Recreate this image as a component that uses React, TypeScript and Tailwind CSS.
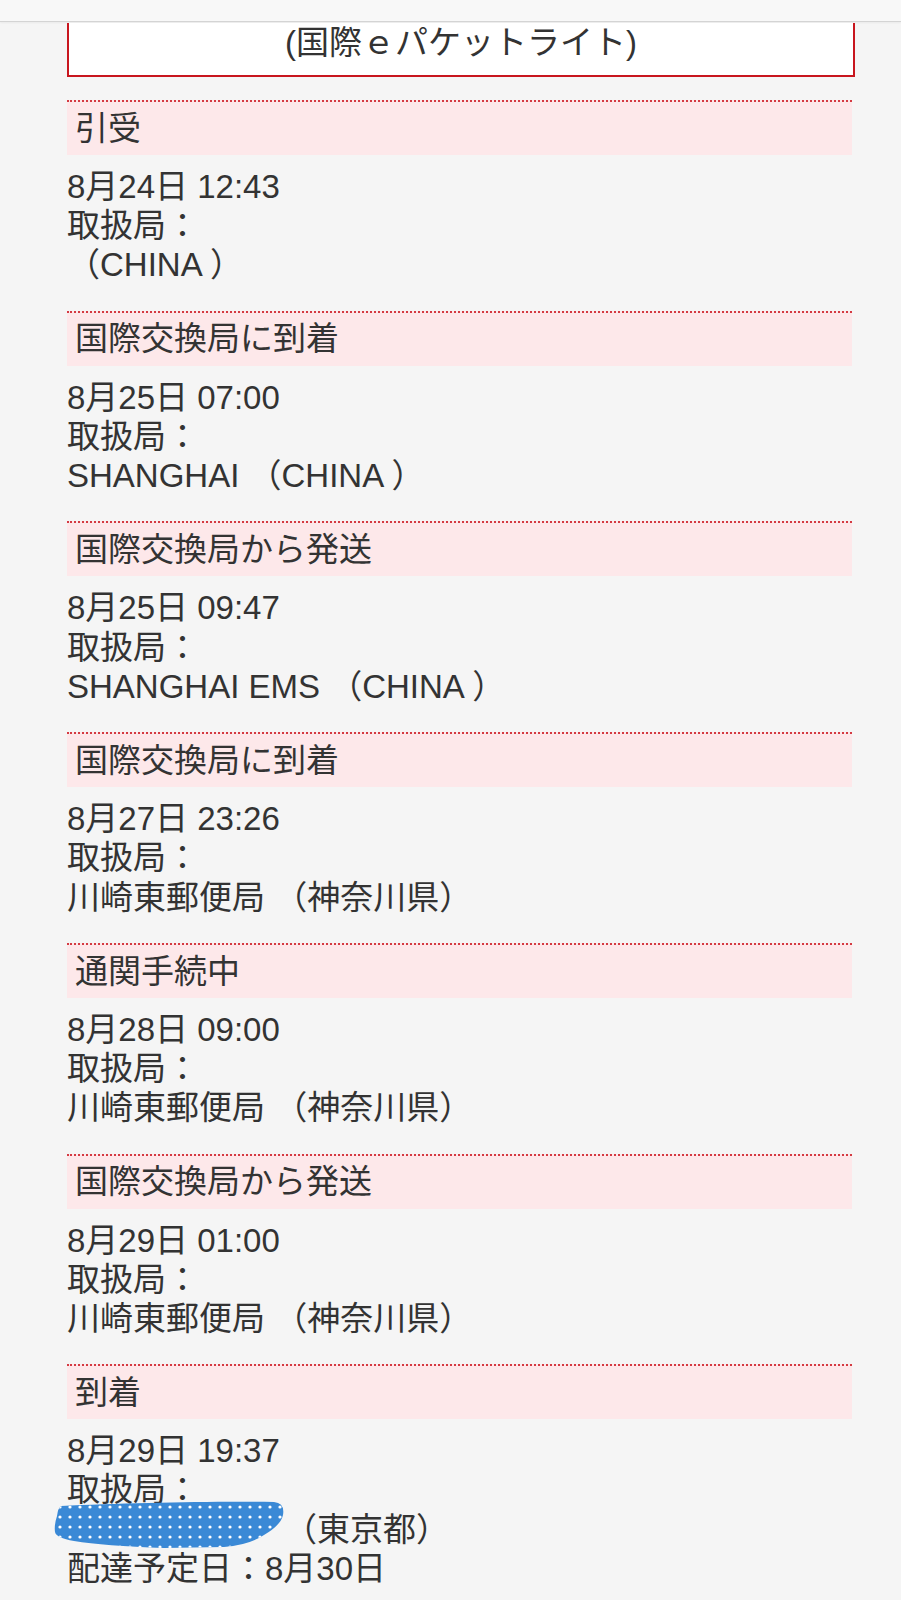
import React from "react";

type Entry = {
  status: string;
  lines: React.ReactNode[];
};

const font = {
  fontFamily: '"Liberation Sans", "Noto Sans CJK JP", sans-serif',
};

const blob =
  "M7 5 C70 2 160 0 220 1 Q231 2 229 14 Q227 24 210 34 Q195 44 170 46 L110 47 Q50 45 20 40 Q2 37 1 31 Q0 24 3 15 Q4 7 7 5 Z";

function Redaction() {
  return (
    <svg
      className="absolute left-[-13px] top-[-9px]"
      width="231"
      height="48"
      viewBox="0 0 231 48"
    >
      <defs>
        <pattern id="dots" width="10" height="10" patternUnits="userSpaceOnUse">
          <circle cx="6" cy="6" r="1.6" fill="#ffffff" />
        </pattern>
      </defs>
      <path d={blob} fill="#3a89d6" />
      <path d={blob} fill="url(#dots)" />
    </svg>
  );
}

const entries: Entry[] = [
  { status: "引受", lines: ["8月24日 12:43", "取扱局：", "（CHINA ）"] },
  {
    status: "国際交換局に到着",
    lines: ["8月25日 07:00", "取扱局：", "SHANGHAI （CHINA ）"],
  },
  {
    status: "国際交換局から発送",
    lines: ["8月25日 09:47", "取扱局：", "SHANGHAI EMS （CHINA ）"],
  },
  {
    status: "国際交換局に到着",
    lines: ["8月27日 23:26", "取扱局：", "川崎東郵便局 （神奈川県）"],
  },
  {
    status: "通関手続中",
    lines: ["8月28日 09:00", "取扱局：", "川崎東郵便局 （神奈川県）"],
  },
  {
    status: "国際交換局から発送",
    lines: ["8月29日 01:00", "取扱局：", "川崎東郵便局 （神奈川県）"],
  },
  {
    status: "到着",
    lines: [
      "8月29日 19:37",
      "取扱局：",
      <span key="r" className="relative inline-block">
        <span className="inline-block w-[217px]" />
        <Redaction />
        <span>（東京都）</span>
      </span>,
      "配達予定日：8月30日",
    ],
  },
];

export default function App() {
  return (
    <div
      className="min-h-[1600px] w-[901px] overflow-hidden bg-[#f5f5f5] text-[#333333]"
      style={font}
    >
      {/* Top bar */}
      <div className="h-[22px] border-b border-[#d4d4d4] bg-[#f8f8f8] shadow-[0_1px_2px_rgba(0,0,0,0.05)]" />

      {/* Service name box */}
      <div className="ml-[67px] mr-[46px] h-[54px] border-x-2 border-b-2 border-[#c8161e] bg-white">
        <div className="mt-px text-center text-[33px] leading-[40px]">
          (国際ｅパケットライト)
        </div>
      </div>

      {/* History */}
      <div className="ml-[67px] mr-[49px] mt-[23px]">
        {entries.map((entry, index) => (
          <div key={index} className="pb-[26.1px]">
            <div className="flex h-[55px] items-center border-t-2 border-dotted border-[#d43a42] bg-[#fde8ea] pl-2 text-[33px]">
              {entry.status}
            </div>
            <div className="pt-3 text-[33px] leading-[39.2px] whitespace-pre">
              {entry.lines.map((line, i) => (
                <div key={i}>{line}</div>
              ))}
            </div>
          </div>
        ))}
      </div>
    </div>
  );
}
